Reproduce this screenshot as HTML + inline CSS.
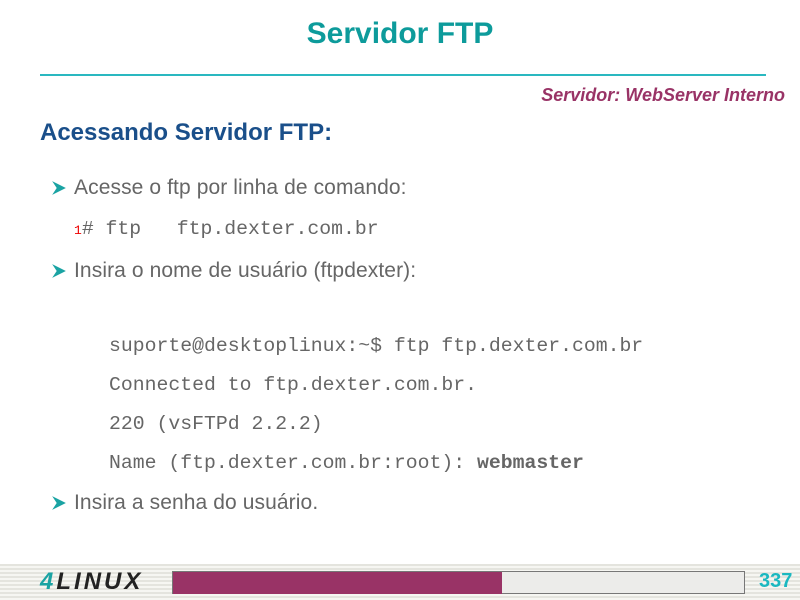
<!DOCTYPE html>
<html><head><meta charset="utf-8"><style>
body{margin:0;width:800px;height:600px;background:#fff;position:relative;overflow:hidden;font-family:"Liberation Sans",sans-serif}
.a{position:absolute;white-space:pre}
.mono{font-family:"Liberation Mono",monospace;font-size:19.8px;color:#666}
.bul{font-size:21px;color:#666;letter-spacing:0.1px}
.arr{position:absolute;width:16px;height:16px}
</style></head><body>
<div class="a" style="left:0;width:800px;text-align:center;top:17px;font-size:30px;font-weight:bold;color:#0d9b9b">Servidor FTP</div>
<div class="a" style="left:40px;top:74px;width:726px;height:2px;background:#2ab8c0"></div>
<div class="a" style="right:15px;top:85px;font-size:18px;font-weight:bold;font-style:italic;color:#993366">Servidor: WebServer Interno</div>
<div class="a" style="left:40px;top:119px;font-size:24px;font-weight:bold;color:#1a4f8a">Acessando Servidor FTP:</div>

<svg class="arr" style="left:51px;top:180px" viewBox="0 0 14 14"><path d="M1 1L13 7L1 13L5 7Z" fill="#1aa3a3"/></svg>
<div class="a bul" style="left:74px;top:176px">Acesse o ftp por linha de comando:</div>
<div class="a mono" style="left:74px;top:218px"><span style="color:#e00;font-size:13px">1</span># ftp   ftp.dexter.com.br</div>

<svg class="arr" style="left:51px;top:263px" viewBox="0 0 14 14"><path d="M1 1L13 7L1 13L5 7Z" fill="#1aa3a3"/></svg>
<div class="a bul" style="left:74px;top:259px">Insira o nome de usuário (ftpdexter):</div>

<div class="a mono" style="left:109px;top:335px">suporte@desktoplinux:~$ ftp ftp.dexter.com.br</div>
<div class="a mono" style="left:109px;top:374px">Connected to ftp.dexter.com.br.</div>
<div class="a mono" style="left:109px;top:413px">220 (vsFTPd 2.2.2)</div>
<div class="a mono" style="left:109px;top:452px">Name (ftp.dexter.com.br:root): <b>webmaster</b></div>

<svg class="arr" style="left:51px;top:495px" viewBox="0 0 14 14"><path d="M1 1L13 7L1 13L5 7Z" fill="#1aa3a3"/></svg>
<div class="a bul" style="left:74px;top:491px">Insira a senha do usuário.</div>

<div class="a" style="left:0;top:564px;width:800px;height:36px;background:repeating-linear-gradient(#e4e4de 0 2px,#f6f6f2 2px 4px)"></div>
<div class="a" style="left:40px;top:568px;font-size:24px;font-weight:bold;font-style:italic;color:#222;letter-spacing:3px"><span style="color:#1aa3a3">4</span>LINUX</div>
<div class="a" style="left:172px;top:571px;width:571px;height:21px;border:1px solid #777;background:#ececea"></div>
<div class="a" style="left:173px;top:572px;width:329px;height:22px;background:#993366"></div>
<div class="a" style="left:759px;top:570px;font-size:20px;font-weight:bold;color:#1ab8c0">337</div>
</body></html>
